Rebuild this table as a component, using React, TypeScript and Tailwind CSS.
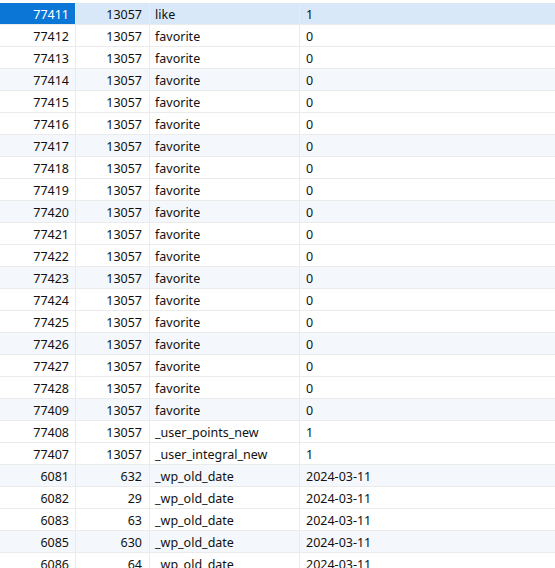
const rows: [string, string, string, string][] = [
  ["77411", "13057", "like", "1"],
  ["77412", "13057", "favorite", "0"],
  ["77413", "13057", "favorite", "0"],
  ["77414", "13057", "favorite", "0"],
  ["77415", "13057", "favorite", "0"],
  ["77416", "13057", "favorite", "0"],
  ["77417", "13057", "favorite", "0"],
  ["77418", "13057", "favorite", "0"],
  ["77419", "13057", "favorite", "0"],
  ["77420", "13057", "favorite", "0"],
  ["77421", "13057", "favorite", "0"],
  ["77422", "13057", "favorite", "0"],
  ["77423", "13057", "favorite", "0"],
  ["77424", "13057", "favorite", "0"],
  ["77425", "13057", "favorite", "0"],
  ["77426", "13057", "favorite", "0"],
  ["77427", "13057", "favorite", "0"],
  ["77428", "13057", "favorite", "0"],
  ["77409", "13057", "favorite", "0"],
  ["77408", "13057", "_user_points_new", "1"],
  ["77407", "13057", "_user_integral_new", "1"],
  ["6081", "632", "_wp_old_date", "2024-03-11"],
  ["6082", "29", "_wp_old_date", "2024-03-11"],
  ["6083", "63", "_wp_old_date", "2024-03-11"],
  ["6085", "630", "_wp_old_date", "2024-03-11"],
  ["6086", "64", "_wp_old_date", "2024-03-11"],
];

export default function App() {
  return (
    <div
      className="h-[568px] w-[555px] overflow-hidden bg-white pt-[3px] text-[12.5px] text-[#111]"
      style={{ fontFamily: '"Noto Sans", "Liberation Sans", sans-serif' }}
    >
      {rows.map((r, i) => {
        const selected = i === 0;
        const striped = i % 3 === 0 && !selected;
        const rowBg = selected ? "bg-[#d9e8f8]" : striped ? "bg-[#f4f8fc]" : "bg-white";
        return (
          <div
            key={r[0]}
            className={`flex h-[22px] items-stretch border-b border-[#ebebeb] leading-none ${rowBg}`}
          >
            <div
              className={`flex w-[76px] shrink-0 items-center justify-end border-r border-[#ebebeb] pt-[4px] pr-[6px] ${
                selected ? "bg-[#0b76d6] text-white" : ""
              }`}
            >
              {r[0]}
            </div>
            <div className="flex w-[74px] shrink-0 items-center justify-end border-r border-[#ebebeb] pt-[4px] pr-[7px]">
              {r[1]}
            </div>
            <div className="flex w-[150px] shrink-0 items-center border-r border-[#ebebeb] pt-[4px] pl-[5px]">
              {r[2]}
            </div>
            <div className="flex flex-1 items-center pt-[4px] pl-[6px]">{r[3]}</div>
          </div>
        );
      })}
    </div>
  );
}
